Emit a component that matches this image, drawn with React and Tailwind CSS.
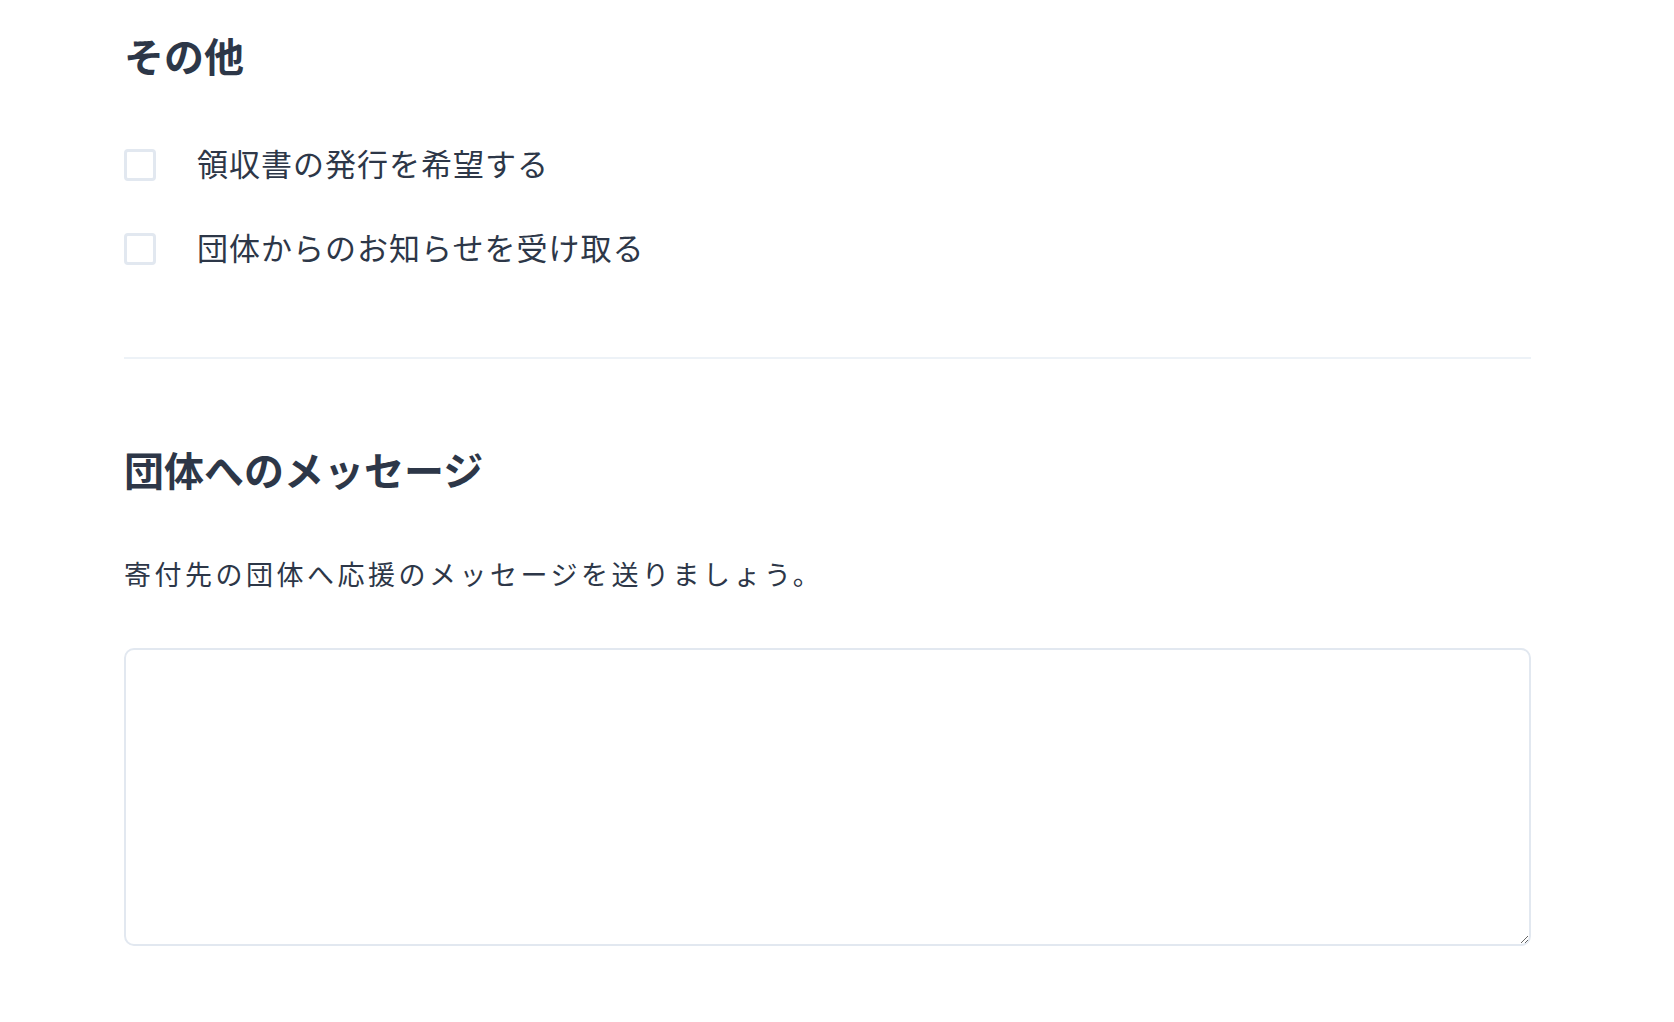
import { useState } from 'react';

const font = { fontFamily: '"Noto Sans CJK JP", "Noto Sans", sans-serif' };

const options = [
  { id: 'receipt', label: '領収書の発行を希望する' },
  { id: 'news', label: '団体からのお知らせを受け取る' },
];

const App = () => {
  const [checked, setChecked] = useState({});
  const [message, setMessage] = useState('');

  return (
    <div className="min-h-screen bg-white text-[#2d3748]" style={font}>
      <div className="ml-[124px] w-[1407px] pt-[25px]">
        <h2 className="text-[40px] leading-[60px] font-bold">その他</h2>

        <div className="mt-[56px] flex flex-col gap-[36px]">
          {options.map(opt => (
            <label key={opt.id} className="flex items-center h-[48px] cursor-pointer">
              <input
                type="checkbox"
                checked={!!checked[opt.id]}
                onChange={e => setChecked({ ...checked, [opt.id]: e.target.checked })}
                className="appearance-none w-[32px] h-[32px] border-[3px] border-[#e2e8f0] rounded-[4px] bg-white checked:bg-[#2d3748] checked:border-[#2d3748]"
              />
              <span className="ml-[41px] pb-[4px] text-[31px] leading-[44px] tracking-[1px]">{opt.label}</span>
            </label>
          ))}
        </div>

        <hr className="mt-[84px] border-0 h-[2px] bg-[#edf2f7]" />

        <h2 className="mt-[80px] text-[40px] leading-[60px] font-bold">団体へのメッセージ</h2>

        <p className="mt-[51px] text-[27px] leading-[48px] tracking-[3.5px]">
          寄付先の団体へ応援のメッセージを送りましょう。
        </p>

        <textarea
          value={message}
          onChange={e => setMessage(e.target.value)}
          className="mt-[50px] block w-full h-[298px] border-2 border-[#e2e8f0] rounded-[10px] p-4 text-[28px] outline-none resize-y"
        />
      </div>
    </div>
  );
};

export default App;
